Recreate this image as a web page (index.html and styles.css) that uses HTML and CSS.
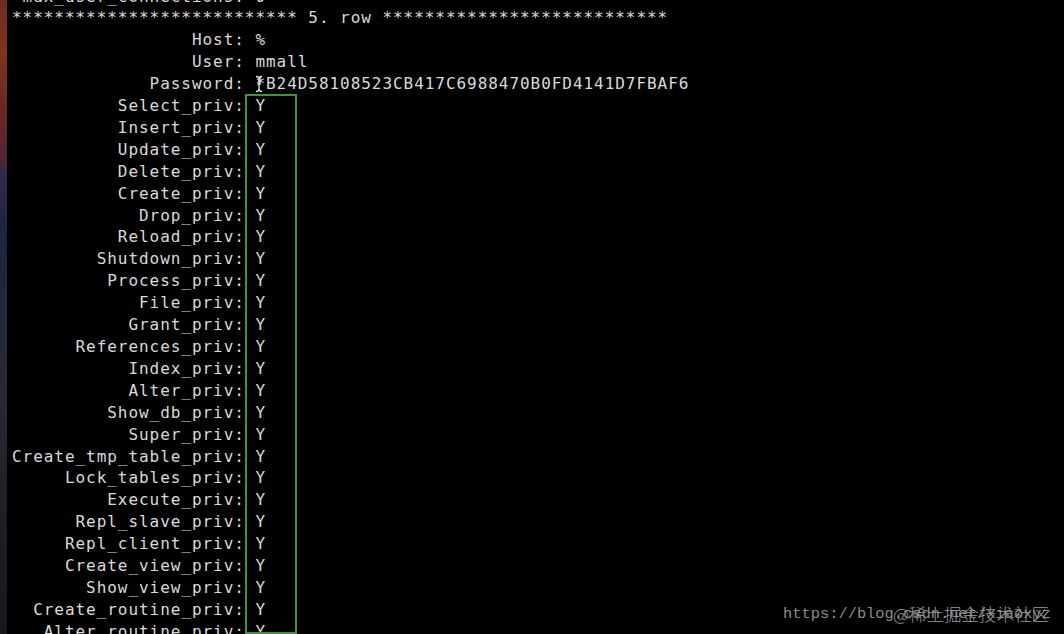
FILE: index.html
```html
<!DOCTYPE html>
<html>
<head>
<meta charset="utf-8">
<link rel="stylesheet" href="styles.css">
</head>
<body>
<div class="screen">
  <div class="wallpaper"></div>
  <div class="terminal">
<pre class="output"> max_user_connections: 0
*************************** 5. row ***************************
                 Host: %
                 User: mmall
             Password: <span class="cursor-cell">*<svg class="ibeam" width="8" height="18" viewBox="0 0 8 18"><path d="M1 1.5 Q4 1.5 4 4 Q4 1.5 7 1.5 M4 4 V14 M1 16.5 Q4 16.5 4 14 Q4 16.5 7 16.5 M2.5 9 H5.5" fill="none" stroke="#f2f2f2" stroke-width="1.3"/></svg></span>B24D58108523CB417C6988470B0FD4141D7FBAF6
          Select_priv: Y
          Insert_priv: Y
          Update_priv: Y
          Delete_priv: Y
          Create_priv: Y
            Drop_priv: Y
          Reload_priv: Y
        Shutdown_priv: Y
         Process_priv: Y
            File_priv: Y
           Grant_priv: Y
      References_priv: Y
           Index_priv: Y
           Alter_priv: Y
         Show_db_priv: Y
           Super_priv: Y
Create_tmp_table_priv: Y
     Lock_tables_priv: Y
         Execute_priv: Y
      Repl_slave_priv: Y
     Repl_client_priv: Y
     Create_view_priv: Y
       Show_view_priv: Y
  Create_routine_priv: Y
   Alter_routine_priv: Y</pre>
  </div>
  <div class="highlight"></div>
  <div class="watermark">
    <span class="wm-url">https://blog.csdn.net/xiaoxyz</span>
    <span class="wm-brand">@稀土掘金技术社区</span>
  </div>
</div>
</body>
</html>
```
FILE: styles.css
```css
html, body {
  margin: 0;
  padding: 0;
  background: #000;
}

.screen {
  position: relative;
  width: 1064px;
  height: 634px;
  overflow: hidden;
  display: flex;
  background: #000;
}

.wallpaper {
  flex: 0 0 7px;
  background: linear-gradient(to bottom,
    #6e2a1f 0%, #83331f 8%, #6a2a22 16%, #5a2530 24%,
    #2c2b4a 28%, #1f2440 36%, #232838 50%, #262a30 64%,
    #1d2126 80%, #15181c 100%);
}

.terminal {
  flex: 1;
}

.output {
  margin: -14.5px 0 0 5px;
  font-family: "DejaVu Sans Mono", "Liberation Mono", monospace;
  font-size: 16px;
  letter-spacing: 0.95px;
  line-height: 21.9px;
  color: #dadada;
}

.cursor-cell {
  position: relative;
}

.ibeam {
  position: absolute;
  left: 0;
  top: 1px;
}

.highlight {
  position: absolute;
  left: 245px;
  top: 94px;
  width: 48px;
  height: 536px;
  border: 2px solid #41913f;
}

.watermark {
  position: absolute;
  left: 783px;
  top: 602px;
  height: 24px;
}

.wm-url {
  position: absolute;
  left: 0;
  top: 0;
  white-space: nowrap;
  font-family: "Liberation Mono", monospace;
  font-size: 15.4px;
  line-height: 24px;
  color: #8c8c8c;
}

.wm-brand {
  position: absolute;
  left: 110px;
  top: 0;
  white-space: nowrap;
  font-family: "Noto Sans CJK SC", sans-serif;
  font-size: 17.5px;
  font-weight: 300;
  line-height: 24px;
  color: #9a9a9a;
}
```
